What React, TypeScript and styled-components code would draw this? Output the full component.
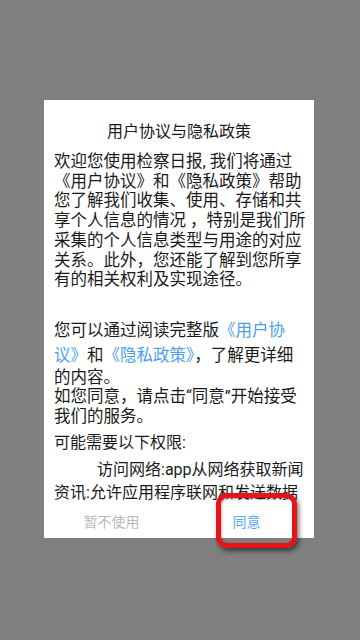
import styled, { createGlobalStyle } from "styled-components";

const GlobalStyle = createGlobalStyle`
  html, body {
    margin: 0;
    padding: 0;
  }
  body {
    font-family: Roboto, "Noto Sans CJK SC", sans-serif;
    background: #808080;
  }
`;

const Screen = styled.div`
  width: 360px;
  min-height: 640px;
  box-sizing: border-box;
  padding: 100px 0 0 44px;
  background-color: #7f7f7f;
  background-image: repeating-conic-gradient(#7b7b7b 0 25%, #848484 0 50%);
  background-size: 2px 2px;
`;

const Dialog = styled.div`
  position: relative;
  width: 270px;
  background: #ffffff;
`;

const Content = styled.div`
  padding: 22px 6px 0 10px;
  color: #1a1a1a;
`;

const Title = styled.h2`
  margin: 0 4px 0 0;
  font-size: 16px;
  font-weight: 400;
  line-height: 20px;
  text-align: center;
  color: #1a1a1a;
`;

const Para = styled.p<{ $size?: number; $lh?: number; $gap?: number; $indent?: number }>`
  margin: ${(p) => p.$gap ?? 0}px 0 0;
  font-size: ${(p) => p.$size ?? 16.5}px;
  line-height: ${(p) => p.$lh ?? 19.7}px;
  text-indent: ${(p) => p.$indent ?? 0}px;
`;

const Link = styled.span`
  color: #4a9ff0;
  line-height: 25px;
`;

const Actions = styled.div`
  display: flex;
  height: 34px;
`;

const ActionButton = styled.button<{ $primary?: boolean }>`
  flex: 1;
  border: none;
  background: transparent;
  padding: 0;
  font-family: inherit;
  font-size: 14px;
  color: ${(p) => (p.$primary ? "#59a8f2" : "#b8b8b8")};
`;

const Highlight = styled.div`
  position: absolute;
  left: 172px;
  top: 393px;
  width: 81px;
  height: 55px;
  box-sizing: border-box;
  border: 5px solid #e5141b;
  border-radius: 11px;
  box-shadow: 2px 3px 5px rgba(0, 0, 0, 0.55),
    inset 1px 1px 3px rgba(0, 0, 0, 0.3);
  pointer-events: none;
`;

export default function App() {
  return (
    <>
      <GlobalStyle />
      <Screen lang="zh-CN">
        <Dialog>
          <Content>
            <Title>用户协议与隐私政策</Title>
            <Para $gap={10}>
              欢迎您使用检察日报, 我们将通过《用户协议》和《隐私政策》帮助您了解我们收集、使用、存储和共享个人信息的情况 ，特别是我们所采集的个人信息类型与用途的对应关系。此外，您还能了解到您所享有的相关权利及实现途径。
            </Para>
            <Para $gap={27.6}>
              您可以通过阅读完整版<Link>《用户协</Link>
              <br />
              <Link>议》</Link>和<Link>《隐私政策》</Link>，了解更详细
              <br />
              的内容。
              <br />
              如您同意，请点击“同意”开始接受我们的服务。
            </Para>
            <Para $gap={6} $size={16}>
              可能需要以下权限:
            </Para>
            <Para $gap={6} $size={16} $lh={23} $indent={43}>
              访问网络:app从网络获取新闻
              <br />
              资讯:允许应用程序联网和发送数据
            </Para>
          </Content>
          <Actions>
            <ActionButton>暂不使用</ActionButton>
            <ActionButton $primary>同意</ActionButton>
          </Actions>
          <Highlight />
        </Dialog>
      </Screen>
    </>
  );
}
